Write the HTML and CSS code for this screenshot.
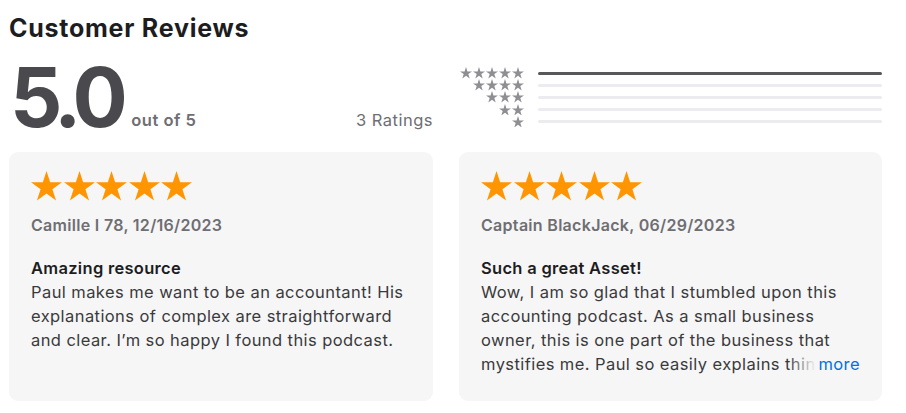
FILE: index.html
```html
<!DOCTYPE html>
<html lang="en">
<head>
<meta charset="utf-8">
<title>Customer Reviews</title>
<link rel="stylesheet" href="styles.css">
</head>
<body>
<section class="reviews">
  <h2 class="title">Customer Reviews</h2>
  <div class="summary">
    <div class="score">
      <div class="score-main">
        <span class="big">5.0</span>
        <span class="outof">out of 5</span>
      </div>
      <span class="count">3 Ratings</span>
    </div>
    <div class="histogram">
      <div class="hrow">
        <div class="hstars">
          <svg viewBox="0 0 30 28.6"><path d="M15 0L18.54 10.9H30L20.73 17.63 24.27 28.53 15 21.79 5.73 28.53 9.27 17.63 0 10.9H11.46Z"/></svg>
          <svg viewBox="0 0 30 28.6"><path d="M15 0L18.54 10.9H30L20.73 17.63 24.27 28.53 15 21.79 5.73 28.53 9.27 17.63 0 10.9H11.46Z"/></svg>
          <svg viewBox="0 0 30 28.6"><path d="M15 0L18.54 10.9H30L20.73 17.63 24.27 28.53 15 21.79 5.73 28.53 9.27 17.63 0 10.9H11.46Z"/></svg>
          <svg viewBox="0 0 30 28.6"><path d="M15 0L18.54 10.9H30L20.73 17.63 24.27 28.53 15 21.79 5.73 28.53 9.27 17.63 0 10.9H11.46Z"/></svg>
          <svg viewBox="0 0 30 28.6"><path d="M15 0L18.54 10.9H30L20.73 17.63 24.27 28.53 15 21.79 5.73 28.53 9.27 17.63 0 10.9H11.46Z"/></svg>
        </div>
        <div class="bar"><div class="fill" style="width:100%"></div></div>
      </div>
      <div class="hrow">
        <div class="hstars">
          <svg viewBox="0 0 30 28.6"><path d="M15 0L18.54 10.9H30L20.73 17.63 24.27 28.53 15 21.79 5.73 28.53 9.27 17.63 0 10.9H11.46Z"/></svg>
          <svg viewBox="0 0 30 28.6"><path d="M15 0L18.54 10.9H30L20.73 17.63 24.27 28.53 15 21.79 5.73 28.53 9.27 17.63 0 10.9H11.46Z"/></svg>
          <svg viewBox="0 0 30 28.6"><path d="M15 0L18.54 10.9H30L20.73 17.63 24.27 28.53 15 21.79 5.73 28.53 9.27 17.63 0 10.9H11.46Z"/></svg>
          <svg viewBox="0 0 30 28.6"><path d="M15 0L18.54 10.9H30L20.73 17.63 24.27 28.53 15 21.79 5.73 28.53 9.27 17.63 0 10.9H11.46Z"/></svg>
        </div>
        <div class="bar"><div class="fill" style="width:0%"></div></div>
      </div>
      <div class="hrow">
        <div class="hstars">
          <svg viewBox="0 0 30 28.6"><path d="M15 0L18.54 10.9H30L20.73 17.63 24.27 28.53 15 21.79 5.73 28.53 9.27 17.63 0 10.9H11.46Z"/></svg>
          <svg viewBox="0 0 30 28.6"><path d="M15 0L18.54 10.9H30L20.73 17.63 24.27 28.53 15 21.79 5.73 28.53 9.27 17.63 0 10.9H11.46Z"/></svg>
          <svg viewBox="0 0 30 28.6"><path d="M15 0L18.54 10.9H30L20.73 17.63 24.27 28.53 15 21.79 5.73 28.53 9.27 17.63 0 10.9H11.46Z"/></svg>
        </div>
        <div class="bar"><div class="fill" style="width:0%"></div></div>
      </div>
      <div class="hrow">
        <div class="hstars">
          <svg viewBox="0 0 30 28.6"><path d="M15 0L18.54 10.9H30L20.73 17.63 24.27 28.53 15 21.79 5.73 28.53 9.27 17.63 0 10.9H11.46Z"/></svg>
          <svg viewBox="0 0 30 28.6"><path d="M15 0L18.54 10.9H30L20.73 17.63 24.27 28.53 15 21.79 5.73 28.53 9.27 17.63 0 10.9H11.46Z"/></svg>
        </div>
        <div class="bar"><div class="fill" style="width:0%"></div></div>
      </div>
      <div class="hrow">
        <div class="hstars">
          <svg viewBox="0 0 30 28.6"><path d="M15 0L18.54 10.9H30L20.73 17.63 24.27 28.53 15 21.79 5.73 28.53 9.27 17.63 0 10.9H11.46Z"/></svg>
        </div>
        <div class="bar"><div class="fill" style="width:0%"></div></div>
      </div>
    </div>
  </div>

  <div class="cards">
    <article class="card">
      <div class="stars">
        <svg viewBox="0 0 30 28.6"><path d="M15 0L18.54 10.9H30L20.73 17.63 24.27 28.53 15 21.79 5.73 28.53 9.27 17.63 0 10.9H11.46Z"/></svg>
        <svg viewBox="0 0 30 28.6"><path d="M15 0L18.54 10.9H30L20.73 17.63 24.27 28.53 15 21.79 5.73 28.53 9.27 17.63 0 10.9H11.46Z"/></svg>
        <svg viewBox="0 0 30 28.6"><path d="M15 0L18.54 10.9H30L20.73 17.63 24.27 28.53 15 21.79 5.73 28.53 9.27 17.63 0 10.9H11.46Z"/></svg>
        <svg viewBox="0 0 30 28.6"><path d="M15 0L18.54 10.9H30L20.73 17.63 24.27 28.53 15 21.79 5.73 28.53 9.27 17.63 0 10.9H11.46Z"/></svg>
        <svg viewBox="0 0 30 28.6"><path d="M15 0L18.54 10.9H30L20.73 17.63 24.27 28.53 15 21.79 5.73 28.53 9.27 17.63 0 10.9H11.46Z"/></svg>
      </div>
      <p class="author">Camille I 78, 12/16/2023</p>
      <h3 class="rtitle">Amazing resource</h3>
      <div class="body">
        <p>Paul makes me want to be an accountant! His explanations of complex are straightforward and clear. I’m so happy I found this podcast.</p>
      </div>
    </article>
    <article class="card">
      <div class="stars">
        <svg viewBox="0 0 30 28.6"><path d="M15 0L18.54 10.9H30L20.73 17.63 24.27 28.53 15 21.79 5.73 28.53 9.27 17.63 0 10.9H11.46Z"/></svg>
        <svg viewBox="0 0 30 28.6"><path d="M15 0L18.54 10.9H30L20.73 17.63 24.27 28.53 15 21.79 5.73 28.53 9.27 17.63 0 10.9H11.46Z"/></svg>
        <svg viewBox="0 0 30 28.6"><path d="M15 0L18.54 10.9H30L20.73 17.63 24.27 28.53 15 21.79 5.73 28.53 9.27 17.63 0 10.9H11.46Z"/></svg>
        <svg viewBox="0 0 30 28.6"><path d="M15 0L18.54 10.9H30L20.73 17.63 24.27 28.53 15 21.79 5.73 28.53 9.27 17.63 0 10.9H11.46Z"/></svg>
        <svg viewBox="0 0 30 28.6"><path d="M15 0L18.54 10.9H30L20.73 17.63 24.27 28.53 15 21.79 5.73 28.53 9.27 17.63 0 10.9H11.46Z"/></svg>
      </div>
      <p class="author">Captain BlackJack, 06/29/2023</p>
      <h3 class="rtitle">Such a great Asset!</h3>
      <div class="body clamped">
        <p>Wow, I am so glad that I stumbled upon this accounting podcast. As a small business owner, this is one part of the business that mystifies me. Paul so easily explains things that I never understood before and makes it enjoyable.</p>
        <span class="more">more</span>
      </div>
    </article>
  </div>
</section>
</body>
</html>
```

FILE: styles.css
```css
* { box-sizing: border-box; }

body {
  margin: 0;
  background: #ffffff;
  font-family: Inter, "Noto Sans", "Liberation Sans", sans-serif;
  color: #1d1d1f;
}

.reviews {
  padding: 12px 9px 0 9px;
  width: 891px;
}

.title {
  margin: 0;
  font-size: 25px;
  line-height: 32px;
  font-weight: 700;
  color: #1d1d1f;
  letter-spacing: 0.75px;
}

.summary {
  display: grid;
  grid-template-columns: 424px 1fr;
  column-gap: 25px;
  margin-top: 14px;
}

.score {
  display: flex;
  align-items: flex-end;
  justify-content: space-between;
  height: 80px;
}

.score-main {
  display: flex;
  align-items: flex-end;
}

.big {
  font-size: 82px;
  line-height: 80px;
  font-weight: 700;
  letter-spacing: -6.5px;
  color: #4a494e;
  margin-left: 1px;
}

.outof,
.count {
  font-size: 16.5px;
  line-height: 20px;
  margin-bottom: 8px;
  color: #6e6e73;
  letter-spacing: 0.5px;
}

.outof {
  margin-left: 10px;
  font-weight: 600;
}

.histogram {
  display: flex;
  flex-direction: column;
  padding-top: 9px;
}

.hrow {
  display: flex;
  align-items: center;
  height: 12.1px;
}

.hstars {
  width: 66px;
  display: flex;
  justify-content: flex-end;
  gap: 1px;
}

.hstars svg {
  width: 12px;
  height: 11.5px;
  fill: #8e8e93;
}

.bar {
  flex: 1;
  height: 3px;
  margin-left: 14px;
  background: #ebebf0;
  border-radius: 2px;
  overflow: hidden;
}

.fill {
  height: 100%;
  background: #58585c;
}

.cards {
  display: grid;
  grid-template-columns: 424px 423px;
  column-gap: 26px;
  margin-top: 14px;
}

.card {
  background: #f6f6f6;
  border-radius: 9px;
  height: 249px;
  padding: 19px 22px 0 22px;
}

.stars {
  display: flex;
  gap: 1.5px;
}

.stars svg {
  width: 31px;
  height: 29.5px;
  fill: #ff9500;
}

.author {
  margin: 14px 0 0 0;
  font-size: 16px;
  line-height: 20px;
  font-weight: 600;
  color: #6e6e73;
  letter-spacing: 0.3px;
}

.rtitle {
  margin: 21px 0 0 0;
  font-size: 16.5px;
  line-height: 24px;
  font-weight: 600;
  color: #1d1d1f;
  letter-spacing: 0.3px;
}

.body {
  position: relative;
  font-size: 16.5px;
  line-height: 24px;
  color: #3a3a3c;
  letter-spacing: 0.42px;
}

.body p {
  margin: 0;
}

.clamped {
  max-height: 96px;
  overflow: hidden;
}

.more {
  position: absolute;
  right: 0;
  bottom: 0;
  line-height: 24px;
  padding-left: 30px;
  color: #0071e3;
  background: linear-gradient(to right, rgba(246,246,246,0) 0, #f6f6f6 28px);
}
```
